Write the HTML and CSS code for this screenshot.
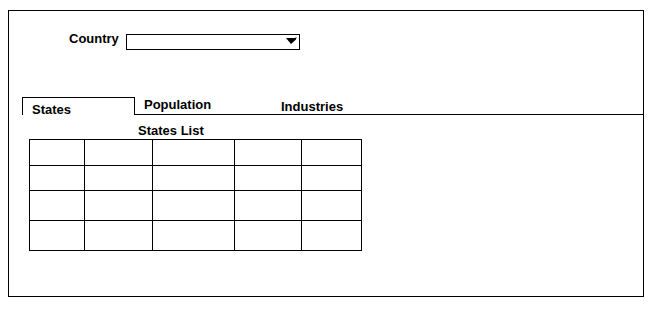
FILE: index.html
```html
<!DOCTYPE html>
<html>
<head>
<meta charset="utf-8">
<link rel="stylesheet" href="styles.css">
</head>
<body>
<div class="frame">
  <div class="country-row">
    <span class="label">Country</span>
    <div class="select">
      <svg class="arrow" width="11" height="8" viewBox="0 0 11 8"><polygon points="0,1 9,1 10.5,0 10,2.5 5,7" fill="#000"/></svg>
    </div>
  </div>
  <div class="tabs">
    <div class="tab active">States</div>
    <div class="tab-rest">
      <span class="tab pop">Population</span>
      <span class="tab ind">Industries</span>
    </div>
  </div>
  <div class="list-title">States List</div>
  <div class="grid">
    <div></div><div></div><div></div><div></div><div></div>
    <div></div><div></div><div></div><div></div><div></div>
    <div></div><div></div><div></div><div></div><div></div>
    <div></div><div></div><div></div><div></div><div></div>
  </div>
</div>
</body>
</html>
```
FILE: styles.css
```css
html, body {
  margin: 0;
  padding: 0;
  background: #fff;
}
body {
  font-family: "Liberation Sans", Arial, sans-serif;
  font-weight: bold;
  font-size: 13px;
  line-height: 15px;
  color: #000;
}
.frame {
  box-sizing: border-box;
  margin: 10px 0 0 8px;
  width: 636px;
  height: 287px;
  border: 1px solid #000;
}
.country-row {
  display: flex;
  align-items: flex-start;
  margin: 20px 0 0 60px;
}
.label {
  width: 57px;
}
.select {
  box-sizing: border-box;
  margin-top: 3px;
  width: 174px;
  height: 16px;
  border: 1px solid #000;
  display: flex;
  justify-content: flex-end;
  align-items: flex-start;
  padding: 2px 2px 0 0;
}
.arrow {
  display: block;
}
.tabs {
  display: flex;
  margin: 47px 0 0 13px;
}
.tab.active {
  box-sizing: border-box;
  width: 113px;
  height: 18px;
  border: 1px solid #000;
  border-bottom: none;
  padding: 4px 0 0 9px;
  white-space: nowrap;
}
.tab-rest {
  flex: 1;
  box-sizing: border-box;
  height: 18px;
  border-bottom: 1px solid #000;
  display: flex;
  align-items: flex-start;
}
.pop {
  width: 137px;
  margin: 0 0 0 9px;
}
.ind {
  margin-top: 2px;
}
.list-title {
  margin: 8px 0 0 129px;
}
.grid {
  display: grid;
  width: max-content;
  grid-template-columns: 55px 68px 82px 67px 60px;
  grid-template-rows: 26px 25px 30px 30px;
  margin: 1px 0 0 20px;
  border-top: 1px solid #000;
  border-left: 1px solid #000;
}
.grid > div {
  box-sizing: border-box;
  border-right: 1px solid #000;
  border-bottom: 1px solid #000;
}
```
